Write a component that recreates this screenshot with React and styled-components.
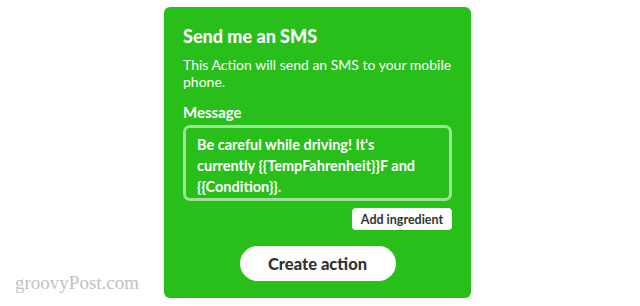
import React from 'react';
import styled, { createGlobalStyle } from 'styled-components';

const GlobalStyle = createGlobalStyle`
  body {
    margin: 0;
    background: #fff;
    font-family: Lato, 'Open Sans', sans-serif;
  }
`;

const Page = styled.div`
  position: relative;
  width: 640px;
  height: 306px;
  padding: 7px 0 0 164px;
  box-sizing: border-box;
  overflow: hidden;
`;

const Card = styled.div`
  width: 307px;
  height: 291px;
  box-sizing: border-box;
  background: #28bf1b;
  border-radius: 6px;
  padding: 18px 19px 0 19px;
  display: flex;
  flex-direction: column;
  color: #fff;
`;

const Title = styled.h2`
  margin: 0;
  font-size: 18px;
  font-weight: 900;
  line-height: 22px;
`;

const Description = styled.p`
  margin: 9px 0 0;
  font-size: 14px;
  line-height: 17px;
`;

const Label = styled.div`
  margin-top: 13px;
  font-size: 15px;
  font-weight: 700;
  line-height: 18px;
`;

const MessageBox = styled.div`
  margin-top: 4px;
  height: 76px;
  box-sizing: border-box;
  border: 3px solid rgba(255, 255, 255, 0.55);
  border-radius: 7px;
  padding: 6px 30px 0 11px;
  font-size: 14.5px;
  font-weight: 700;
  line-height: 21px;
`;

const Actions = styled.div`
  display: flex;
  justify-content: flex-end;
  margin-top: 7px;
`;

const SmallButton = styled.button`
  background: #fff;
  border: none;
  border-radius: 4px;
  height: 22px;
  width: 100px;
  padding: 0;
  font-family: Lato, sans-serif;
  font-size: 12.5px;
  font-weight: 700;
  color: #333;
`;

const MainButton = styled.button`
  align-self: center;
  margin-top: 16px;
  width: 156px;
  height: 35px;
  border: none;
  border-radius: 18px;
  background: #fff;
  font-family: Lato, sans-serif;
  font-size: 16.5px;
  font-weight: 900;
  color: #333;
  padding: 0;
`;

const Watermark = styled.div`
  position: absolute;
  left: 15px;
  top: 272px;
  font-family: 'Liberation Serif', serif;
  font-size: 19px;
  color: #c2c2c2;
`;

export default function App() {
  return (
    <>
      <GlobalStyle />
      <Page>
        <Card>
          <Title>Send me an SMS</Title>
          <Description>This Action will send an SMS to your mobile phone.</Description>
          <Label>Message</Label>
          <MessageBox>
            Be careful while driving! It's currently {'{{TempFahrenheit}}'}F and {'{{Condition}}'}.
          </MessageBox>
          <Actions>
            <SmallButton>Add ingredient</SmallButton>
          </Actions>
          <MainButton>Create action</MainButton>
        </Card>
        <Watermark>groovyPost.com</Watermark>
      </Page>
    </>
  );
}
